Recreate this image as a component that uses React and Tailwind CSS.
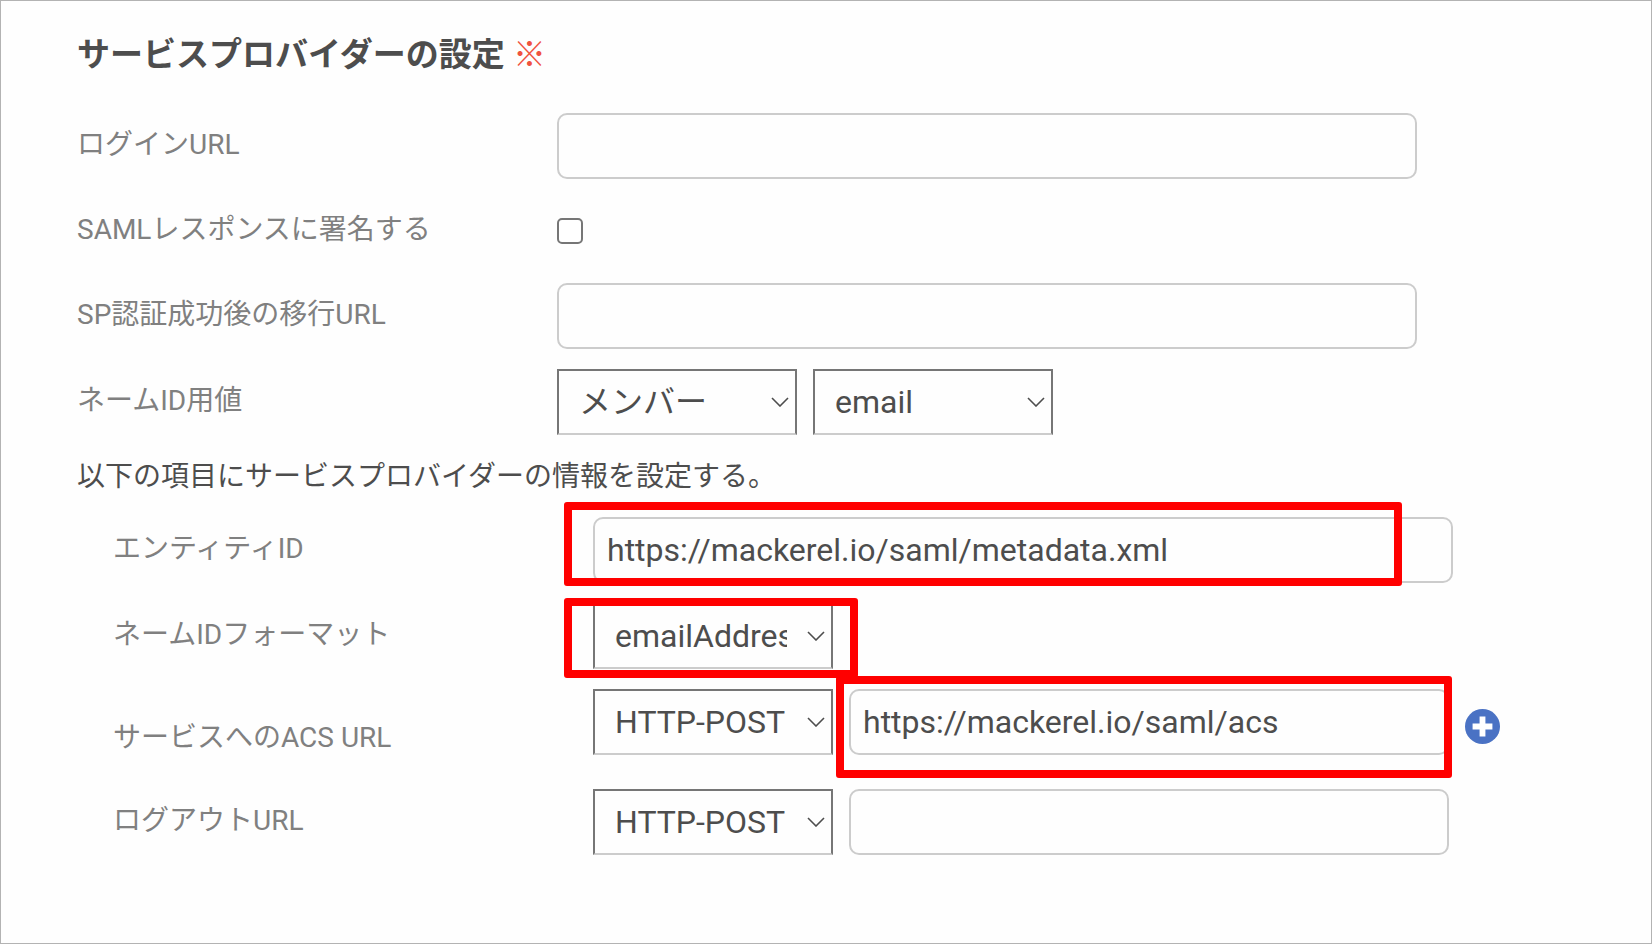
import React, { useState } from 'react';

const inputClass =
    "block h-[66px] w-full rounded-[10px] border-2 border-[#cccccc] bg-transparent px-3 text-[32px] leading-10 text-[#4d4d4d] outline-none";

const Label = ({ htmlFor, children }) => (
    <label htmlFor={htmlFor} className="shrink-0 basis-[480px] pb-0.5 text-[28px] leading-9 text-[#808080]">
        {children}
    </label>
);

const Select = ({ id, label, value, onChange, options }) => (
    <div className="relative w-[240px] shrink-0">
        <select
            id={id}
            aria-label={label}
            value={value}
            onChange={(event) => onChange(event.target.value)}
            className="block h-[66px] w-full appearance-none border-2 border-[#767676] border-b-[#cccccc] bg-transparent pr-11 pl-5 text-[32px] leading-10 text-[#4d4d4d] outline-none"
        >
            {options.map((option) => (
                <option key={option} value={option}>
                    {option}
                </option>
            ))}
        </select>
        <svg
            viewBox="0 0 18 10"
            className="pointer-events-none absolute top-7 right-2 h-[10px] w-[18px] fill-none stroke-[#4d4d4d] stroke-[1.6]"
        >
            <path d="M1 1 L9 9 L17 1" />
        </svg>
    </div>
);

// Red frame drawn over a field that has to be filled in
const Highlight = ({ className }) => (
    <span aria-hidden="true" className={`pointer-events-none absolute rounded-[3px] border-8 border-[#ff0000] ${className}`} />
);

const bindings = ['HTTP-POST', 'HTTP-Redirect'];

const ServiceProviderSettings = () => {
    const [loginUrl, setLoginUrl] = useState('');
    const [signResponse, setSignResponse] = useState(false);
    const [successUrl, setSuccessUrl] = useState('');
    const [nameIdSource, setNameIdSource] = useState('メンバー');
    const [nameIdValue, setNameIdValue] = useState('email');
    const [entityId, setEntityId] = useState('https://mackerel.io/saml/metadata.xml');
    const [nameIdFormat, setNameIdFormat] = useState('emailAddress');
    const [acsBinding, setAcsBinding] = useState('HTTP-POST');
    const [acsUrl, setAcsUrl] = useState('https://mackerel.io/saml/acs');
    const [logoutBinding, setLogoutBinding] = useState('HTTP-POST');
    const [logoutUrl, setLogoutUrl] = useState('');

    return (
        <form className="min-h-screen border border-[#b3b3b3] bg-[#fefefe] pt-[34px] pr-10 pb-20 pl-[76px] font-[Roboto,'Noto_Sans_CJK_JP',sans-serif]">
            <h1 className="text-[33px] leading-10 font-bold text-[#4d4d4d]">
                サービスプロバイダーの設定 <span className="font-normal text-[#f0523f]">※</span>
            </h1>

            <div className="mt-[38px] flex flex-col gap-[19px]">
                <div className="flex items-center">
                    <Label htmlFor="login-url">ログインURL</Label>
                    <div className="max-w-[860px] grow">
                        <input id="login-url" type="text" value={loginUrl} onChange={(e) => setLoginUrl(e.target.value)} className={inputClass} />
                    </div>
                </div>
                <div className="flex h-[66px] items-center">
                    <Label htmlFor="sign-response">SAMLレスポンスに署名する</Label>
                    <input
                        id="sign-response"
                        type="checkbox"
                        checked={signResponse}
                        onChange={(e) => setSignResponse(e.target.checked)}
                        className="size-[26px] appearance-none rounded-[5px] border-2 border-[#767676] bg-white checked:bg-[#4a72c4]"
                    />
                </div>
                <div className="flex items-center">
                    <Label htmlFor="success-url">SP認証成功後の移行URL</Label>
                    <div className="max-w-[860px] grow">
                        <input id="success-url" type="text" value={successUrl} onChange={(e) => setSuccessUrl(e.target.value)} className={inputClass} />
                    </div>
                </div>
            </div>

            <div className="mt-5 flex items-center">
                <Label htmlFor="name-id-source">ネームID用値</Label>
                <div className="flex gap-4">
                    <Select id="name-id-source" value={nameIdSource} onChange={setNameIdSource} options={['メンバー', '固定値']} />
                    <Select id="name-id-value" label="ネームID用値" value={nameIdValue} onChange={setNameIdValue} options={['email', 'id']} />
                </div>
            </div>

            <p className="mt-[22px] text-[28px] leading-10 text-[#4d4d4d]">以下の項目にサービスプロバイダーの情報を設定する。</p>

            <div className="mt-5 flex flex-col gap-5 pl-9">
                <div className="flex items-center">
                    <Label htmlFor="entity-id">エンティティID</Label>
                    <div className="relative max-w-[860px] grow">
                        <input id="entity-id" type="text" value={entityId} onChange={(e) => setEntityId(e.target.value)} className={inputClass} />
                        <Highlight className="-top-[15px] right-[51px] -bottom-[3px] -left-[29px]" />
                    </div>
                </div>
                <div className="flex items-center">
                    <Label htmlFor="name-id-format">ネームIDフォーマット</Label>
                    <div className="relative">
                        <Select id="name-id-format" value={nameIdFormat} onChange={setNameIdFormat} options={['emailAddress', 'persistent', 'transient', 'unspecified']} />
                        <Highlight className="-top-[5px] -right-[25px] -bottom-[9px] -left-[29px]" />
                    </div>
                </div>
            </div>

            <div className="mt-5 flex h-[100px] items-center pl-9">
                <Label htmlFor="acs-url">サービスへのACS URL</Label>
                <div className="flex grow items-start gap-4 self-start">
                    <Select id="acs-binding" label="サービスへのACS URL" value={acsBinding} onChange={setAcsBinding} options={bindings} />
                    <div className="relative max-w-[600px] grow">
                        <input id="acs-url" type="text" value={acsUrl} onChange={(e) => setAcsUrl(e.target.value)} className={inputClass} />
                        <Highlight className="-top-[13px] -right-[3px] -bottom-[23px] -left-[13px]" />
                    </div>
                    <button type="button" aria-label="追加" className="mt-5 shrink-0">
                        <svg viewBox="0 0 36 36" className="block size-[35px]">
                            <circle cx="18" cy="18" r="18" fill="#4a72c4" />
                            <path d="M18 7.8 V28.2 M7.8 18 H28.2" stroke="#fff" strokeWidth="6" />
                        </svg>
                    </button>
                </div>
            </div>

            <div className="flex items-center pl-9">
                <Label htmlFor="logout-url">ログアウトURL</Label>
                <div className="flex grow gap-4">
                    <Select id="logout-binding" label="ログアウトURL" value={logoutBinding} onChange={setLogoutBinding} options={bindings} />
                    <div className="max-w-[600px] grow">
                        <input id="logout-url" type="text" value={logoutUrl} onChange={(e) => setLogoutUrl(e.target.value)} className={inputClass} />
                    </div>
                </div>
            </div>
        </form>
    );
};

export default ServiceProviderSettings;
